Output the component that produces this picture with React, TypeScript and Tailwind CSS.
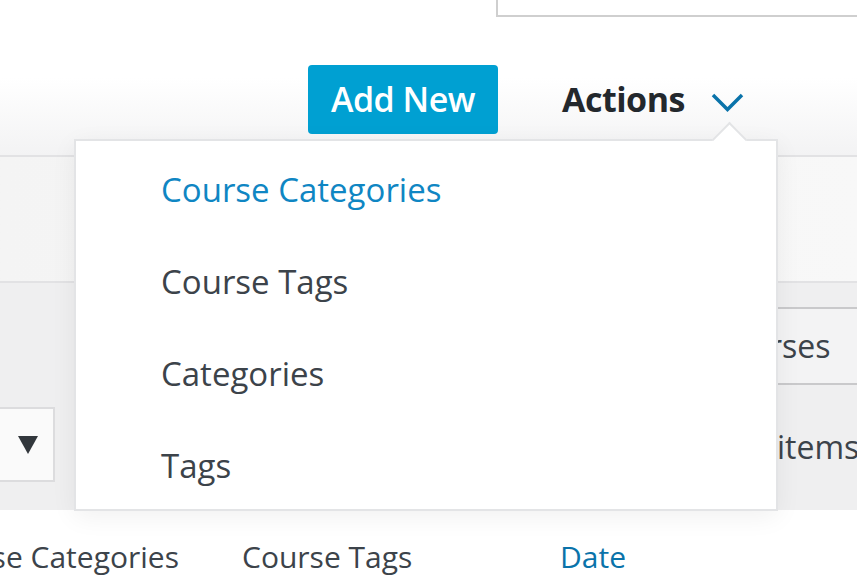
import React from 'react';

const menuItems = [
    {label: 'Course Categories', active: true},
    {label: 'Course Tags', active: false},
    {label: 'Categories', active: false},
    {label: 'Tags', active: false},
];

// Выпадающее меню действий
const ActionsMenu: React.FC = () => {
    return (
        <div className="absolute left-[74px] top-[139px] w-[704px] h-[372px] bg-white border-2 border-[#e3e4e6] shadow-[0_6px_24px_rgba(0,0,0,0.06)]">
            <div className="absolute -top-[14px] left-[641px] w-[25px] h-[25px] rotate-45 bg-white border-l-2 border-t-2 border-[#e3e4e6]"/>
            <ul className="relative pt-[26px] pl-[85px]">
                {menuItems.map((item) => (
                    <li
                        key={item.label}
                        className={`h-[92px] text-[33px] leading-[46px] ${item.active ? 'text-[#0f86c3]' : 'text-[#3c434a]'}`}
                    >
                        {item.label}
                    </li>
                ))}
            </ul>
        </div>
    );
};

function App() {
    return (
        <div
            className="relative w-[857px] h-[575px] overflow-hidden bg-white text-[#3c434a]"
            style={{fontFamily: '"Open Sans", "Noto Sans", sans-serif'}}
        >
            {/* Шапка */}
            <div className="h-[155px] bg-gradient-to-b from-white via-white to-[#f3f3f4] flex flex-col">
                <div className="flex justify-end">
                    <div className="w-[361px] h-[17px] bg-white border-l-2 border-b-2 border-[#cfcfcf]"/>
                </div>
                <div className="flex items-center mt-[48px] pl-[308px]">
                    <button className="w-[190px] h-[69px] rounded-[4px] bg-[#00a0d2] text-white text-[34px] font-semibold tracking-[-0.5px]">
                        Add New
                    </button>
                    <span className="ml-[64px] text-[34px] font-bold text-[#23282d] tracking-[-0.5px]">Actions</span>
                    <svg className="ml-[26px] mt-[4px]" width="33" height="20" viewBox="0 0 33 20" fill="none">
                        <path d="M2 3l14.5 14.5L31 3" stroke="#0a73aa" strokeWidth="3.5"/>
                    </svg>
                </div>
            </div>

            {/* Полоса фильтров */}
            <div className="h-[128px] border-t-2 border-b-2 border-[#e2e2e4] bg-gradient-to-r from-[#f4f4f4] to-[#f8f8f8]"/>

            {/* Панель таблицы */}
            <div className="h-[227px] bg-[#efeff0] flex justify-between">
                <div className="flex flex-col justify-start">
                    <div className="w-[55px] h-[75px] mt-[124px] bg-[#fafafa] border-2 border-l-0 border-[#dcdcde] flex items-center justify-end pr-[15px]">
                        <svg width="20" height="18" viewBox="0 0 20 18">
                            <path d="M0 0h20L10 18z" fill="#32373c"/>
                        </svg>
                    </div>
                </div>
                <div className="w-[80px] flex flex-col">
                    <div className="mt-[24px] h-[78px] bg-[#f3f3f4] border-t-2 border-b-2 border-[#c9c9cb] flex items-center text-[32px] -indent-[8px] whitespace-nowrap">
                        rses
                    </div>
                    <div className="flex-1 flex items-center text-[32px] -mt-[2px] whitespace-nowrap">
                        items
                    </div>
                </div>
            </div>

            {/* Заголовки колонок */}
            <div className="flex items-center h-[65px] pt-[28px] text-[30px] whitespace-nowrap">
                <span className="-ml-[76px] w-[318px]">Course Categories</span>
                <span className="w-[318px]">Course Tags</span>
                <span className="text-[#0a73aa]">Date</span>
            </div>

            <ActionsMenu/>
        </div>
    );
}

export default App
